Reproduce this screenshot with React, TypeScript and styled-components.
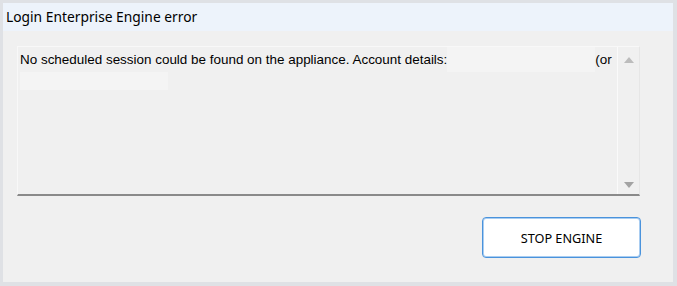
import styled, { createGlobalStyle } from "styled-components";

const GlobalStyle = createGlobalStyle`
  html, body {
    margin: 0;
    padding: 0;
    background: #dfe1e5;
  }
`;

const Window = styled.div`
  width: 677px;
  height: 286px;
  box-sizing: border-box;
  padding: 3px 4px 4px 3px;
  background: #dfe1e5;
  display: flex;
  flex-direction: column;
`;

const TitleBar = styled.div`
  height: 28px;
  flex: none;
  background: #edf3fb;
  display: flex;
  align-items: center;
  padding-left: 3px;
  padding-bottom: 2px;
  box-sizing: border-box;
  font-family: "Noto Sans", "Open Sans", sans-serif;
  font-size: 13.8px;
  color: #000;
`;

const Body = styled.div`
  flex: 1;
  background: #f0f0f0;
  display: flex;
  flex-direction: column;
  padding: 15px 33px 0 14px;
`;

const TextBox = styled.div`
  height: 150px;
  display: flex;
  box-sizing: border-box;
  border-top: 1px solid #f8f8f8;
  border-left: 1px solid #f8f8f8;
  border-right: 1px solid #e6e6e6;
  border-bottom: 2px solid #8a8a8a;
  background: #f0f0f0;
`;

const TextArea = styled.div`
  flex: 1;
  padding: 0 2px;
  font-family: "Liberation Sans", Arial, sans-serif;
  font-size: 13.45px;
  line-height: 25px;
  color: #000;
  overflow: hidden;
  white-space: nowrap;
`;

const Redacted = styled.span<{ $w: number; $h: number }>`
  display: inline-block;
  vertical-align: top;
  width: ${(p) => p.$w}px;
  height: ${(p) => p.$h}px;
  background: #f4f4f4;
`;

const ScrollBar = styled.div`
  width: 21px;
  flex: none;
  border-left: 1px solid #fafafa;
  display: flex;
  flex-direction: column;
  justify-content: space-between;
  align-items: center;
  padding: 10px 0 6px;
`;

const Arrow = styled.div<{ $down?: boolean }>`
  width: 0;
  height: 0;
  border-left: 5px solid transparent;
  border-right: 5px solid transparent;
  ${(p) =>
    p.$down
      ? "border-top: 6px solid #a3a3a3;"
      : "border-bottom: 6px solid #bcbcbc;"}
`;

const ButtonRow = styled.div`
  display: flex;
  justify-content: flex-end;
  margin-top: 21px;
  margin-right: -1px;
`;

const Button = styled.button`
  width: 159px;
  height: 41px;
  background: #fff;
  border: 1px solid #4a93dc;
  box-shadow: inset 0 0 0 1px #a9cdf1;
  border-radius: 4px;
  font-family: "Noto Sans", "Open Sans", sans-serif;
  font-size: 12.7px;
  color: #000;
  padding: 0;
`;

export default function App() {
  return (
    <>
      <GlobalStyle />
      <Window>
        <TitleBar>Login Enterprise Engine error</TitleBar>
        <Body>
          <TextBox>
            <TextArea>
              No scheduled session could be found on the appliance. Account details:
              <Redacted $w={148} $h={25} />(or
              <br />
              <Redacted $w={148} $h={18} />
            </TextArea>
            <ScrollBar>
              <Arrow />
              <Arrow $down />
            </ScrollBar>
          </TextBox>
          <ButtonRow>
            <Button>STOP ENGINE</Button>
          </ButtonRow>
        </Body>
      </Window>
    </>
  );
}
